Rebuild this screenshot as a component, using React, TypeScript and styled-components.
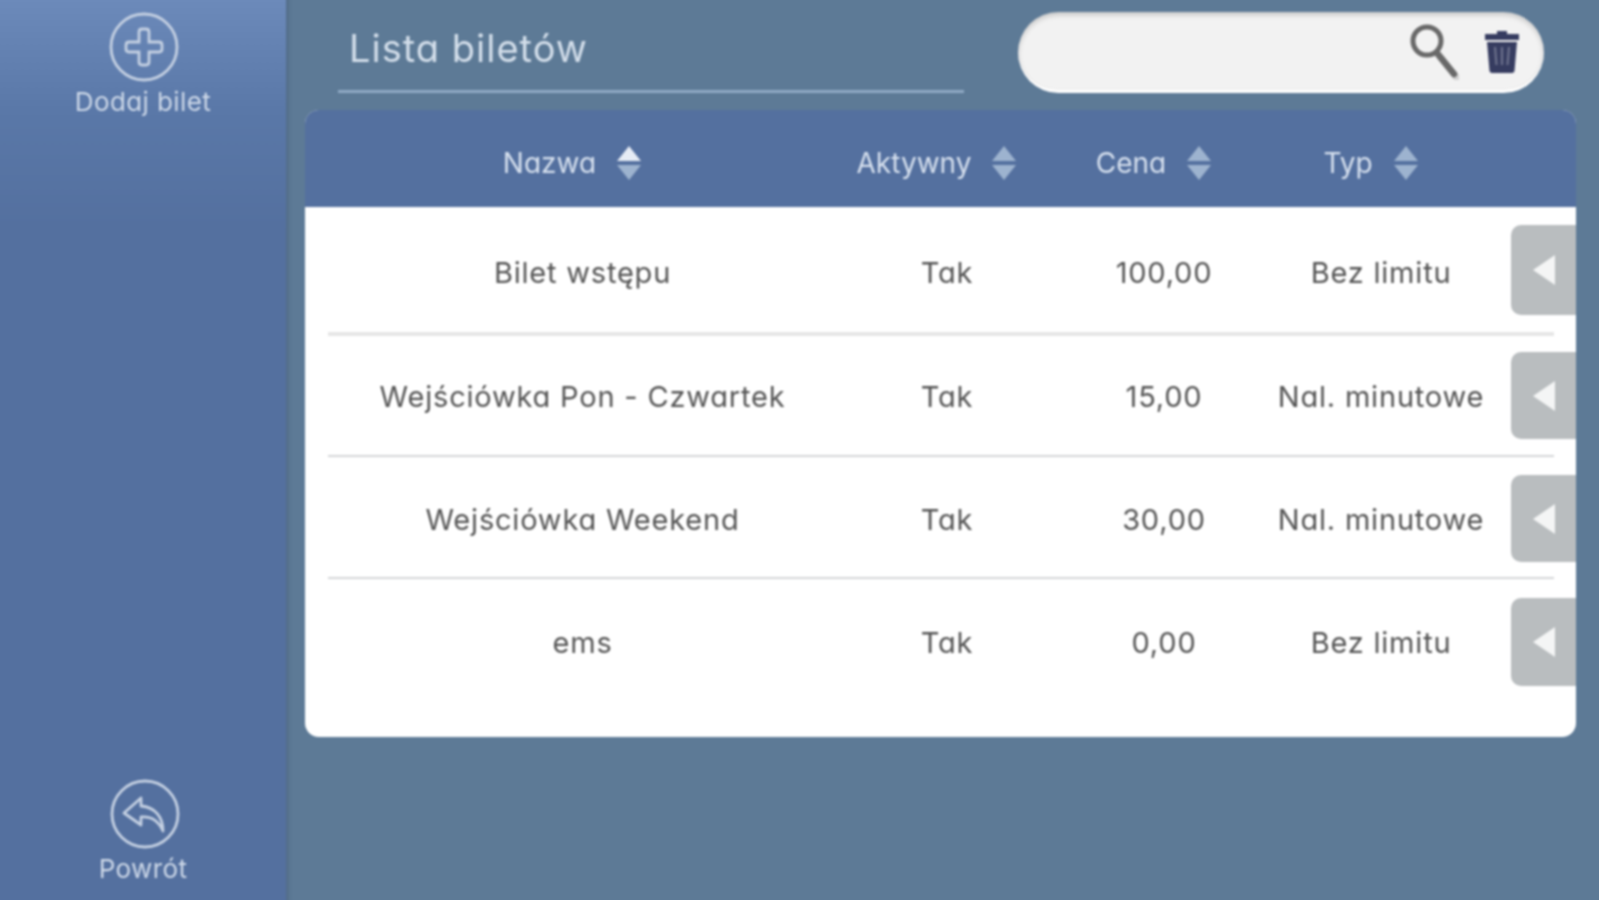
import React from "react";
import styled, { createGlobalStyle } from "styled-components";

const Global = createGlobalStyle`
  html, body { margin: 0; padding: 0; height: 100%; background: #5d7a96; overflow: hidden; }
  * { box-sizing: border-box; }
`;

const FONT = `Inter, Lato, sans-serif`;

const Shell = styled.div`
  display: flex;
  width: 1611px;
  height: 912px;
  margin: -6px;
  background: #5d7a96;
  font-family: ${FONT};
  font-feature-settings: "cv11";
  filter: blur(0.9px);
`;

const Sidebar = styled.aside`
  width: 292px;
  height: 912px;
  flex: none;
  display: flex;
  flex-direction: column;
  justify-content: space-between;
  align-items: center;
  padding: 18px 0 22px 6px;
  background: linear-gradient(180deg, #6c8aba 6px, #5a78a8 116px, #54709f 236px, #54709f 100%);
  box-shadow: 3px 0 3px rgba(70, 95, 125, 0.45);
`;

const SideAction = styled.button`
  display: flex;
  flex-direction: column;
  align-items: center;
  gap: 5px;
  padding: 0;
  border: 0;
  background: none;
  color: #cdd8e8;
  font: 400 26px/30px ${FONT};
  letter-spacing: 0.4px;
  font-feature-settings: "cv11";
`;

const IconSlot = styled.span`
  display: block;
  height: 70px;
  margin-left: 3px;
`;

const Main = styled.main`
  flex: 1;
  min-width: 0;
  padding: 18px 23px 0 19px;
`;

const TopBar = styled.header`
  height: 98px;
  display: flex;
  align-items: flex-start;
  justify-content: space-between;
`;

const TitleWrap = styled.div`
  width: 626px;
  height: 81px;
  margin-left: 33px;
  padding: 13px 0 0 11px;
  border-bottom: 3px solid #8fa9c4;
`;

const Title = styled.h1`
  margin: 0;
  font: 400 38px/46px ${FONT};
  letter-spacing: 1px;
  font-feature-settings: "cv11";
  color: #d3deea;
`;

const SearchPill = styled.div`
  width: 526px;
  height: 81px;
  margin-right: 38px;
  border-radius: 41px;
  background: #f2f2f2;
  border-bottom: 3px solid #fff;
  box-shadow: inset 0 3px 5px rgba(0, 0, 0, 0.18);
  display: flex;
  align-items: center;
  justify-content: flex-end;
  gap: 24px;
  padding: 0 23px 0 0;
`;

const Panel = styled.section`
  width: 1271px;
  height: 627px;
  border-radius: 14px;
  overflow: hidden;
  background: #fff;
`;

const COLS = "505px 224px 210px 224px 1fr";

const HeadRow = styled.div`
  display: grid;
  grid-template-columns: ${COLS};
  height: 97px;
  padding: 8px 0 0 25px;
  background: #54709f;
  align-items: center;
`;

const HeadCell = styled.div`
  display: flex;
  align-items: center;
  justify-content: center;
  gap: 20px;
  padding-right: 20px;
  color: #d6e0ee;
  font: 400 28px/32px ${FONT};
  font-feature-settings: "cv11";
`;

const BodyRow = styled.div<{ $h: number; $nudge: number }>`
  display: grid;
  grid-template-columns: ${COLS};
  height: ${(p) => p.$h}px;
  padding: ${(p) => p.$nudge}px 0 0 25px;
  align-items: center;
`;

const Cell = styled.div`
  padding-top: 2px;
  text-align: center;
  color: #555;
  white-space: nowrap;
  font: 400 29px/32px ${FONT};
  letter-spacing: 0.8px;
  font-feature-settings: "cv11";
`;

const RowToggle = styled.button<{ $h: number; $lift: number }>`
  justify-self: end;
  width: 65px;
  height: ${(p) => p.$h}px;
  margin-top: ${(p) => -p.$lift}px;
  padding: 0 0 0 22px;
  border: 0;
  border-radius: 10px 0 0 10px;
  background: #b9bdbf;
  display: flex;
  align-items: center;
`;

const Divider = styled.hr<{ $thick?: boolean }>`
  height: ${(p) => (p.$thick ? 4 : 2)}px;
  margin: 0 22px 0 23px;
  border: 0;
  background: ${(p) => (p.$thick ? "#e6e6e6" : "#d4d6d8")};
`;

const CircleIcon = ({ children }: { children: React.ReactNode }) => (
  <svg width="70" height="70" viewBox="0 0 70 70" fill="none" stroke="#c4d0e2" strokeWidth="2.8">
    <circle cx="35" cy="35" r="33" />
    {children}
  </svg>
);

const Sort = ({ up }: { up?: boolean }) => (
  <svg width="26" height="36" viewBox="0 0 26 36">
    <path d="M13 1 L25 16 H1 Z" fill={up ? "#e6ecf5" : "#9db3cf"} />
    <path d="M13 35 L25 20 H1 Z" fill="#9db3cf" />
  </svg>
);

const Toggle = () => (
  <svg width="22" height="30" viewBox="0 0 22 30">
    <path d="M22 0 V30 L0 15 Z" fill="#f4f5f5" />
  </svg>
);

const Search = () => (
  <svg width="50" height="58" viewBox="0 0 50 58" fill="none">
    <path d="M31 35 L48 56" stroke="#00000022" strokeWidth="7" strokeLinecap="round" />
    <circle cx="18" cy="19" r="14" stroke="#696969" strokeWidth="5" />
    <path d="M28 31 L45 52" stroke="#696969" strokeWidth="6.5" strokeLinecap="round" />
  </svg>
);

const Trash = () => (
  <svg width="38" height="44" viewBox="0 0 38 44">
    <path d="M14 2 H24 V5 H36 V11 H2 V5 H14 Z" fill="#363c60" />
    <path d="M4 13 H34 L31.5 42 Q31 44 29 44 H9 Q7 44 6.500 42 Z" fill="#363c60" />
    <path d="M12 18 L13.500 36 M19 18 V36 M26 18 L24.500 36" stroke="#6c718c" strokeWidth="2.200" />
  </svg>
);

const rows = [
  { name: "Bilet wstępu", price: "100,00", type: "Bez limitu", h: 125, btn: 90, nudge: 4, lift: 3, thick: true },
  { name: "Wejściówka Pon - Czwartek", price: "15,00", type: "Nal. minutowe", h: 119, btn: 87, nudge: 0, lift: 0 },
  { name: "Wejściówka Weekend", price: "30,00", type: "Nal. minutowe", h: 120, btn: 87, nudge: 3, lift: 0 },
  { name: "ems", price: "0,00", type: "Bez limitu", h: 125, btn: 88, nudge: 0, lift: 0, last: true },
];

export default function App() {
  return (
    <Shell>
      <Global />
      <Sidebar>
        <SideAction>
          <IconSlot>
            <CircleIcon>
              <path d="M30 20 Q30 17 33 17 H37 Q40 17 40 20 V30 H50 Q53 30 53 33 V37 Q53 40 50 40 H40 V50 Q40 53 37 53 H33 Q30 53 30 50 V40 H20 Q17 40 17 37 V33 Q17 30 20 30 H30 Z" />
            </CircleIcon>
          </IconSlot>
          Dodaj bilet
        </SideAction>
        <SideAction>
          <IconSlot>
            <CircleIcon>
              <path d="M31 19 L14 34 L31 46 V38 C42 37 49 43 53 52 C53 38 45 28 31 27 Z" strokeLinejoin="round" />
            </CircleIcon>
          </IconSlot>
          Powrót
        </SideAction>
      </Sidebar>
      <Main>
        <TopBar>
          <TitleWrap>
            <Title>Lista biletów</Title>
          </TitleWrap>
          <SearchPill>
            <Search />
            <Trash />
          </SearchPill>
        </TopBar>
        <Panel>
          <HeadRow>
            <HeadCell>Nazwa <Sort up /></HeadCell>
            <HeadCell>Aktywny <Sort /></HeadCell>
            <HeadCell>Cena <Sort /></HeadCell>
            <HeadCell>Typ <Sort /></HeadCell>
          </HeadRow>
          {rows.map((r) => (
            <React.Fragment key={r.name}>
              <BodyRow $h={r.h} $nudge={r.nudge}>
                <Cell>{r.name}</Cell>
                <Cell>Tak</Cell>
                <Cell>{r.price}</Cell>
                <Cell>{r.type}</Cell>
                <RowToggle $h={r.btn} $lift={r.lift}><Toggle /></RowToggle>
              </BodyRow>
              {!r.last && <Divider $thick={r.thick} />}
            </React.Fragment>
          ))}
        </Panel>
      </Main>
    </Shell>
  );
}
